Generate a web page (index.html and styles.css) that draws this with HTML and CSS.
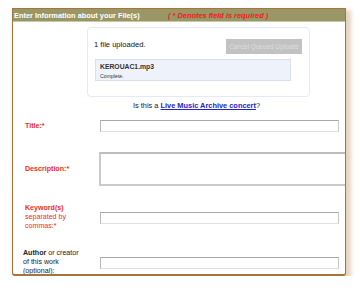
FILE: index.html
```html
<!DOCTYPE html>
<html>
<head>
<meta charset="utf-8">
<link rel="stylesheet" href="styles.css">
</head>
<body>
<div class="panel">
  <div class="header">
    <span class="header-title">Enter Information about your File(s)</span>
    <span class="header-req">( * Denotes field is required )</span>
  </div>
  <div class="upload-box">
    <div class="upload-top">
      <span class="upload-count">1 file uploaded.</span>
      <span class="cancel-btn">Cancel Queued Uploads</span>
    </div>
    <div class="file-item">
      <div class="file-name">KEROUAC1.mp3</div>
      <div class="file-status">Complete.</div>
    </div>
  </div>
  <div class="lma">Is this a <a class="lma-link" href="#">Live Music Archive concert</a>?</div>
  <div class="form">
    <div class="row row-title">
      <div class="label req"><b>Title:*</b></div>
      <div class="field"><div class="input"></div></div>
    </div>
    <div class="row row-desc">
      <div class="label req"><b>Description:*</b></div>
      <div class="field"><div class="textarea"></div></div>
    </div>
    <div class="row row-kw">
      <div class="label req"><b>Keyword(s)</b><br>separated by<br>commas:*</div>
      <div class="field"><div class="input"></div></div>
    </div>
    <div class="row row-author">
      <div class="label author"><b>Author</b> or creator<br>of this work<br>(optional):</div>
      <div class="field"><div class="input"></div></div>
    </div>
  </div>
</div>
</body>
</html>
```
FILE: styles.css
```css
html, body {
  margin: 0;
  padding: 0;
  background: #fff;
  font-family: "Liberation Sans", Arial, sans-serif;
}
.panel {
  margin: 8px 0 0 12px;
  width: 332px;
  height: 265px;
  border: 1px solid #a7743d;
  border-bottom-width: 2px;
  border-radius: 0 0 3px 3px;
  overflow: hidden;
  background: #fff;
  box-shadow: 3px 4px 4px 2px #e6d3be;
}
.header {
  height: 12px;
  background: #9a9766;
  border-bottom: 1px solid #c9c7a6;
  display: flex;
  align-items: center;
  padding-left: 1px;
  font-size: 7.4px;
  font-weight: bold;
  color: #fff;
  white-space: nowrap;
}
.header-title {
  width: 154px;
}
.header-req {
  color: #ee1c1c;
  font-style: italic;
}
.upload-box {
  margin: 5px 0 0 74px;
  width: 221px;
  height: 68px;
  border: 1px solid #e3e9f6;
  border-radius: 4px;
  box-sizing: content-box;
}
.upload-top {
  display: flex;
  justify-content: space-between;
  align-items: flex-start;
  padding: 11px 7px 0 6px;
  height: 20px;
}
.upload-count {
  font-size: 7.6px;
  color: #111;
  margin-top: 1px;
}
.cancel-btn {
  width: 76px;
  height: 15px;
  background: #c2c2c2;
  color: #dedede;
  font-size: 6.4px;
  display: flex;
  align-items: center;
  justify-content: center;
  white-space: nowrap;
}
.file-item {
  margin: 0 0 0 7px;
  width: 190px;
  height: 20px;
  background: #eef2fb;
  border: 1px solid #d7dff0;
  padding: 0 0 0 4px;
  box-sizing: content-box;
}
.file-name {
  font-size: 6.8px;
  font-weight: bold;
  color: #333;
  margin-top: 3px;
  line-height: 8px;
}
.file-status {
  font-size: 5.2px;
  color: #333;
  margin-top: 2px;
  line-height: 6px;
}
.lma {
  margin-top: 4px;
  padding-left: 120px;
  font-size: 7.4px;
  color: #222;
  line-height: 10px;
  white-space: nowrap;
}
.lma-link {
  color: #2323c8;
  font-weight: bold;
}
.form {
  display: flex;
  flex-direction: column;
  padding-left: 12px;
}
.row {
  display: flex;
  align-items: center;
}
.row-title { margin-top: 9px; height: 12px; }
.row-desc { margin-top: 20px; height: 34px; }
.row-kw { margin-top: 18px; height: 27px; }
.row-author { margin-top: 18px; height: 27px; }
.label {
  width: 75px;
  flex: none;
  font-size: 7.1px;
  line-height: 9px;
}
.req {
  color: #ee2b2b;
}
.author {
  color: #222;
  margin-left: -2px;
  width: 77px;
}
.field {
  flex: none;
}
.input {
  width: 237px;
  height: 10px;
  border: 1px solid #c8c8c8;
  border-top-color: #a8a8a8;
  border-left-color: #b8b8b8;
  border-bottom-color: #e0e0e0;
}
.textarea {
  margin-left: -1px;
  width: 260px;
  height: 30px;
  border: 2px solid #cacaca;
  border-top-color: #bdbdbd;
}
```
